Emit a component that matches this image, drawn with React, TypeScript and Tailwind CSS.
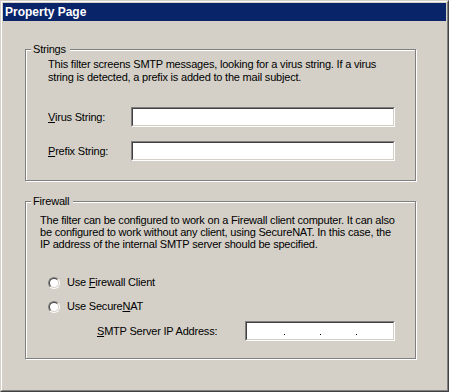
import React from "react";

const font = { fontFamily: '"Liberation Sans", Arial, sans-serif' };

function Sunken({ className, children }: { className: string; children?: React.ReactNode }) {
  return (
    <div className={`border border-t-[#808080] border-l-[#808080] border-b-white border-r-white ${className}`}>
      <div className="h-full w-full border border-t-[#404040] border-l-[#404040] border-b-[#d4d0c8] border-r-[#d4d0c8] bg-white">
        {children}
      </div>
    </div>
  );
}

function Radio({ children }: { children: React.ReactNode }) {
  return (
    <div className="flex h-[13px] items-center">
      <div className="h-[12px] w-[12px] rounded-full border border-t-[#808080] border-l-[#808080] border-b-white border-r-white">
        <div className="h-full w-full rounded-full border border-t-[#404040] border-l-[#404040] border-b-[#d4d0c8] border-r-[#d4d0c8] bg-white" />
      </div>
      <span className="ml-[7px] leading-[13px]">{children}</span>
    </div>
  );
}

function Group({ title, className, children }: { title: string; className: string; children: React.ReactNode }) {
  return (
    <fieldset
      className={`w-[391px] border border-[#808080] shadow-[1px_1px_0_#fff,inset_1px_1px_0_#fff] ${className}`}
    >
      <legend className="ml-[5px] bg-[#d4d0c8] px-[2px] pr-[4px] leading-[13px]">{title}</legend>
      {children}
    </fieldset>
  );
}

export default function App() {
  return (
    <div
      className="h-[392px] w-[449px] border border-t-[#d4d0c8] border-l-[#d4d0c8] border-b-[#404040] border-r-[#404040] bg-[#d4d0c8] text-[11px] tracking-[-0.2px] text-black"
      style={font}
    >
      <div className="h-full w-full border border-t-white border-l-white border-b-[#808080] border-r-[#808080] p-px">
        <div className="h-[18px] bg-[#0a246a] pl-[2px] text-[12px] font-bold leading-[18px] tracking-normal text-white">
          Property Page
        </div>

        <div className="pl-[22px]">
          <Group title="Strings" className="mt-[22px] pb-[19px]">
            <div className="pl-[22px] pt-[2px]">
              <p className="leading-[13px]">
                This filter screens SMTP messages, looking for a virus string. If a virus
                <br />
                string is detected, a prefix is added to the mail subject.
              </p>
              <div className="mt-[23px] flex items-center">
                <span className="w-[83px] leading-[13px]">
                  <span className="underline">V</span>irus String:
                </span>
                <Sunken className="h-[20px] w-[264px]" />
              </div>
              <div className="mt-[14px] flex items-center">
                <span className="w-[83px] leading-[13px]">
                  <span className="underline">P</span>refix String:
                </span>
                <Sunken className="h-[20px] w-[264px]" />
              </div>
            </div>
          </Group>

          <Group title="Firewall" className="mt-[14px] pb-[17px]">
            <div className="pl-[14px] pt-[6px]">
              <p className="leading-[12px]">
                The filter can be configured to work on a Firewall client computer. It can also
                <br />
                be configured to work without any client, using SecureNAT. In this case, the
                <br />
                IP address of the internal SMTP server should be specified.
              </p>
              <div className="ml-[8px] mt-[26px]">
                <Radio>
                  Use <span className="underline">F</span>irewall Client
                </Radio>
              </div>
              <div className="ml-[8px] mt-[11px]">
                <Radio>
                  Use Secure<span className="underline">N</span>AT
                </Radio>
              </div>
              <div className="ml-[57px] mt-[8px] flex items-center">
                <span className="w-[148px] leading-[13px]">
                  <span className="underline">S</span>MTP Server IP Address:
                </span>
                <Sunken className="h-[20px] w-[150px]">
                  <div className="flex h-full">
                    <div className="w-[37px]" />
                    <div className="mt-[11px] h-px w-px bg-black" />
                    <div className="w-[35px]" />
                    <div className="mt-[11px] h-px w-px bg-black" />
                    <div className="w-[35px]" />
                    <div className="mt-[11px] h-px w-px bg-black" />
                  </div>
                </Sunken>
              </div>
            </div>
          </Group>
        </div>
      </div>
    </div>
  );
}
